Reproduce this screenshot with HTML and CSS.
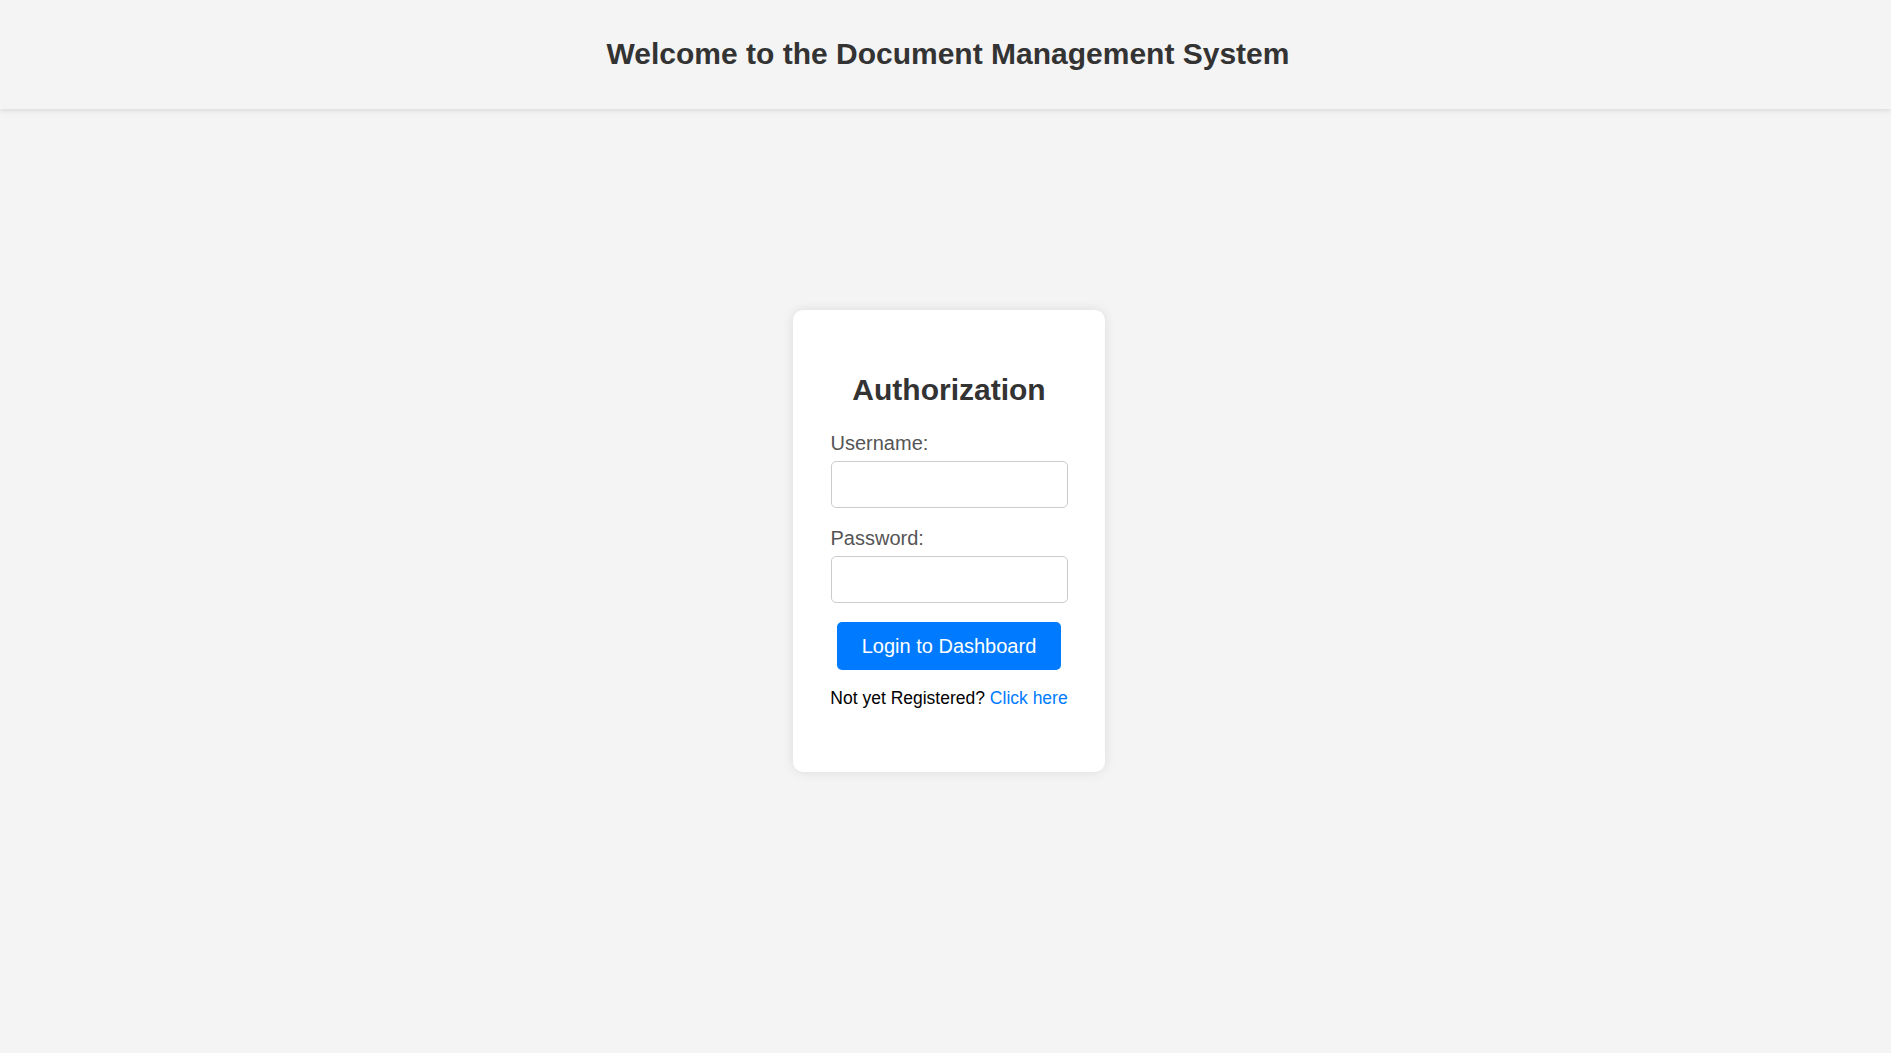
FILE: index.html
```html
<!DOCTYPE html>
<html lang="en">
<head>
<meta charset="utf-8">
<title>Document Management System</title>
<link rel="stylesheet" href="styles.css">
</head>
<body>
<header class="site-header">
  <h1 class="site-title">Welcome to the Document Management System</h1>
</header>
<main class="main">
  <section class="card">
    <h2 class="card-title">Authorization</h2>
    <form class="login-form" onsubmit="return false;">
      <label class="field-label" for="username">Username:</label>
      <input class="field-input" type="text" id="username" name="username">
      <label class="field-label" for="password">Password:</label>
      <input class="field-input" type="password" id="password" name="password">
      <div class="actions">
        <button class="btn-primary" type="submit">Login to Dashboard</button>
      </div>
    </form>
    <p class="register">Not yet Registered? <a class="register-link" href="#">Click here</a></p>
  </section>
</main>
</body>
</html>
```

FILE: styles.css
```css
* { box-sizing: border-box; }

html, body {
  margin: 0;
  padding: 0;
}

body {
  background: #f4f4f4;
  font-family: "Liberation Sans", Arial, sans-serif;
  color: #333;
  min-height: 100vh;
}

.site-header {
  height: 109px;
  background: #f4f4f4;
  box-shadow: 0 2px 5px rgba(0, 0, 0, 0.1);
  display: flex;
  align-items: center;
  justify-content: center;
  padding-left: 5px;
  position: relative;
}

.site-title {
  margin: 0;
  font-size: 30px;
  line-height: 34.5px;
  font-weight: bold;
  color: #333;
}

.main {
  display: flex;
  justify-content: center;
  padding-top: 201px;
  padding-left: 7px;
}

.card {
  width: 312px;
  background: #fff;
  border-radius: 10px;
  box-shadow: 0 0 12px rgba(0, 0, 0, 0.1);
  padding: 37.5px;
}

.card-title {
  margin: 25px 0 25.5px;
  font-size: 30px;
  line-height: 34px;
  text-align: center;
  color: #333;
  font-weight: bold;
}

.login-form {
  display: flex;
  flex-direction: column;
}

.field-label {
  display: block;
  font-size: 20px;
  line-height: 23px;
  color: #555;
  margin-bottom: 6px;
}

.field-input {
  width: 100%;
  height: 47px;
  padding: 12.5px;
  font-size: 16.67px;
  font-family: "Liberation Sans", Arial, sans-serif;
  border: 1px solid #ccc;
  border-radius: 5px;
  background: #fff;
  margin: 0 0 19px;
  outline: none;
}

.actions {
  display: flex;
  justify-content: center;
}

.btn-primary {
  height: 48px;
  padding: 0 25px;
  background: #007bff;
  color: #fff;
  border: none;
  border-radius: 5px;
  font-family: "Liberation Sans", Arial, sans-serif;
  font-size: 20px;
  line-height: 23px;
  cursor: pointer;
}

.register {
  margin: 18px -4px 26.5px;
  font-size: 17.5px;
  line-height: 20px;
  color: #000;
  text-align: center;
  white-space: nowrap;
}

.register-link {
  color: #007bff;
  text-decoration: none;
}
```
